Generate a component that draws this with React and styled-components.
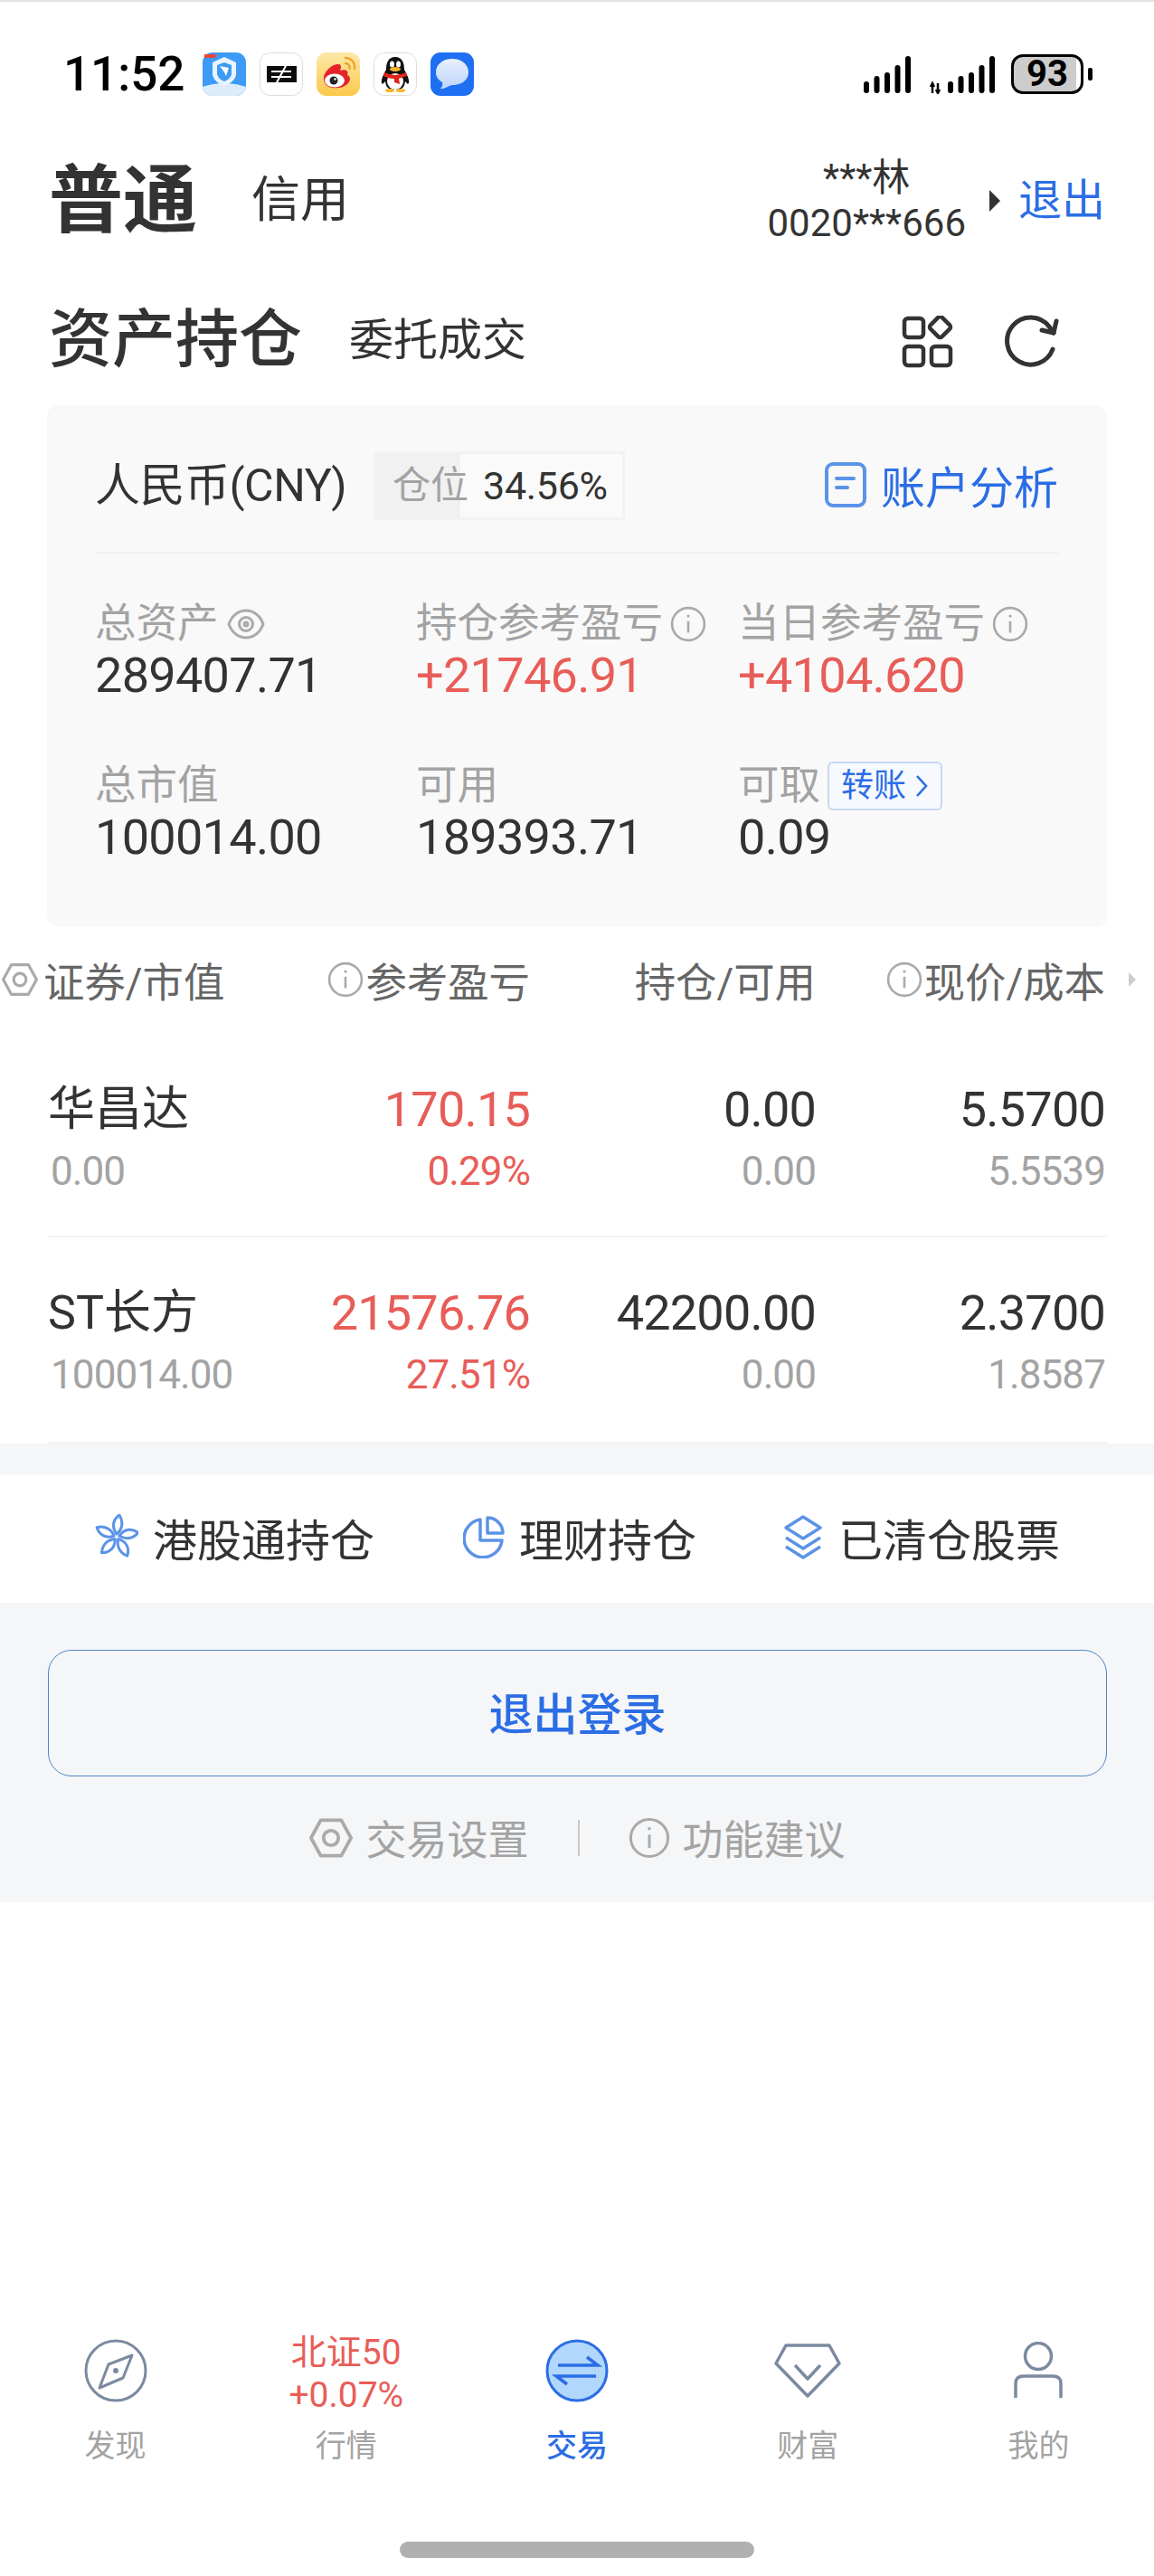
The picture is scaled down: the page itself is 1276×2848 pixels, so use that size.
import React from "react";
import styled, { createGlobalStyle } from "styled-components";

const BLUE = "#2b6de5";
const ICON_BLUE = "#5b93e8";
const RED = "#e85d58";
const DARK = "#333333";
const GREY = "#a3a3a3";
const NAV_STROKE = "#7b8aa0";

const GlobalStyle = createGlobalStyle`
  html, body {
    margin: 0;
    padding: 0;
    background: #fff;
  }
  body {
    font-family: Roboto, "Noto Sans CJK SC", sans-serif;
    color: ${DARK};
  }
`;

const Page = styled.div`
  width: 1276px;
  height: 2848px;
  display: flex;
  flex-direction: column;
  border-top: 2px solid #e4e4e4;
  box-sizing: border-box;
  overflow: hidden;
`;

/* status bar */
const StatusBar = styled.div`
  height: 160px;
  display: flex;
  align-items: center;
  padding: 0 68px 0 70px;
`;

const Clock = styled.div`
  font-size: 53px;
  font-weight: 500;
  color: #000;
  width: 154px;
`;

const AppIcons = styled.div`
  display: flex;
  gap: 15px;
`;

const AppIcon = styled.svg`
  width: 48px;
  height: 48px;
  display: block;
`;

const StatusRight = styled.div`
  margin-left: auto;
  display: flex;
  align-items: center;
`;

const SignalSvg = styled.svg`
  display: block;
  margin-left: ${(p) => (p.$arrows ? "21px" : "0")};
`;

const Battery = styled.div`
  width: 80px;
  height: 44px;
  box-sizing: border-box;
  border: 3px solid #000;
  border-radius: 13px;
  background: linear-gradient(90deg, #cccccc 93%, #fff 93%);
  font-size: 40px;
  font-weight: 700;
  line-height: 38px;
  text-align: center;
  color: #000;
  margin-left: 18px;
`;

const BatteryTip = styled.div`
  width: 5px;
  height: 14px;
  border-radius: 2px;
  background: #000;
  margin-left: 5px;
`;

/* account row */
const AccountRow = styled.div`
  height: 120px;
  display: flex;
  align-items: center;
  padding: 0 54px 0 54px;
`;

const MainTab = styled.div`
  font-size: 82px;
  font-weight: 700;
  line-height: 1;
`;

const SubTab = styled.div`
  font-size: 54px;
  margin-left: 60px;
  line-height: 1;
`;

const AccountInfo = styled.div`
  margin-left: auto;
  text-align: center;
  font-size: 42px;
  line-height: 50px;
`;

const Caret = styled.div`
  width: 0;
  height: 0;
  border-left: 12px solid #333;
  border-top: 12px solid transparent;
  border-bottom: 12px solid transparent;
  margin: 0 20px 0 26px;
`;

const Logout = styled.div`
  font-size: 48px;
  color: ${BLUE};
  line-height: 1;
`;

/* title row */
const TitleRow = styled.div`
  height: 112px;
  margin-top: 38px;
  display: flex;
  align-items: center;
  padding: 0 54px 0 54px;
`;

const Title = styled.div`
  font-size: 70px;
  font-weight: 500;
  line-height: 1;
`;

const TitleTab = styled.div`
  font-size: 49px;
  margin-left: 52px;
  line-height: 1;
`;

const TitleIcons = styled.div`
  margin-left: auto;
  margin-right: 50px;
  margin-top: 3px;
  display: flex;
  gap: 55px;
  align-items: center;
`;

/* asset card */
const Card = styled.div`
  margin: 16px 52px 0;
  height: 577px;
  box-sizing: border-box;
  background: #f9f9f9;
  border-radius: 12px;
  padding: 0 54px;
`;

const CardHead = styled.div`
  height: 164px;
  box-sizing: border-box;
  padding-top: 16px;
  display: flex;
  align-items: center;
  border-bottom: 2px solid #f1f1f1;
`;

const Currency = styled.div`
  font-size: 50px;
  line-height: 1;
  letter-spacing: -0.5px;
  margin-left: -1px;
`;

const Position = styled.div`
  margin-left: 30px;
  width: 278px;
  height: 76px;
  box-sizing: border-box;
  border: 3px solid #f2f2f2;
  display: flex;
  align-items: center;
  font-size: 42px;
  line-height: 70px;
  background: linear-gradient(90deg, #f1f1f1 93px, #fafafa 93px);
`;

const PositionLabel = styled.div`
  width: 118px;
  color: ${GREY};
  white-space: nowrap;
  box-sizing: border-box;
  padding-left: 18px;
`;

const PositionValue = styled.div`
  flex: 1;
  font-size: 43px;
  letter-spacing: -0.3px;
`;

const Analysis = styled.div`
  margin-left: auto;
  margin-top: -3px;
  display: flex;
  align-items: center;
  gap: 16px;
  font-size: 49px;
  color: ${BLUE};
`;

const Metrics = styled.div`
  display: grid;
  grid-template-columns: 355px 356px 1fr;
  grid-auto-rows: 179px;
  padding-top: 50px;
  margin-left: -1px;
`;

const Metric = styled.div`
  display: flex;
  flex-direction: column;
`;

const MetricLabel = styled.div`
  display: flex;
  align-items: center;
  gap: 8px;
  font-size: 45.5px;
  line-height: 56px;
  height: 56px;
  color: ${GREY};
`;

const MetricValue = styled.div`
  font-size: 54px;
  letter-spacing: -0.7px;
  line-height: 60px;
  margin-top: -1px;
  color: ${(p) => (p.$up ? RED : DARK)};
`;

const TransferTag = styled.div`
  display: flex;
  align-items: center;
  height: 54px;
  box-sizing: border-box;
  padding: 0 13px;
  border: 2px solid #c6d8f2;
  border-radius: 6px;
  background: #f6f9fe;
  font-size: 36px;
  color: ${BLUE};
  gap: 9px;
`;

/* holdings table */
const TableHead = styled.div`
  height: 100px;
  margin-top: 8px;
  display: grid;
  grid-template-columns: 284px 302px 316px 320px 54px;
  align-items: center;
  font-size: 45.4px;
  color: #666;
`;

const HeadCell = styled.div`
  display: flex;
  align-items: center;
  justify-content: ${(p) => (p.$left ? "flex-start" : "flex-end")};
  gap: ${(p) => (p.$left ? "6px" : "2px")};
  padding-left: ${(p) => (p.$left ? "2px" : "0")};
`;

const MoreCaret = styled.div`
  width: 0;
  height: 0;
  border-left: 8px solid #ccc;
  border-top: 8px solid transparent;
  border-bottom: 8px solid transparent;
  justify-self: end;
  margin-right: 20px;
`;

const Row = styled.div`
  margin: 0 52px 0 53px;
  height: ${(p) => p.$h}px;
  box-sizing: border-box;
  padding-top: ${(p) => p.$top}px;
  border-bottom: 2px solid #f3f3f3;
  display: grid;
  grid-template-columns: 231px 302px 316px 320px;
`;

const Cell = styled.div`
  text-align: ${(p) => (p.$left ? "left" : "right")};
`;

const MainValue = styled.div`
  font-size: ${(p) => (p.$name ? 52 : 54)}px;
  letter-spacing: ${(p) => (p.$name ? 0 : -0.8)}px;
  line-height: 68px;
  color: ${(p) => (p.$up ? RED : DARK)};
`;

const SubValue = styled.div`
  font-size: 44px;
  letter-spacing: -0.9px;
  line-height: 68px;
  color: ${(p) => (p.$up ? RED : GREY)};
  padding-left: ${(p) => (p.$left ? "3px" : "0")};
`;

/* links and footer */
const GreyGap = styled.div`
  height: 34px;
  background: #f4f6f8;
`;

const Band = styled.div`
  height: 142px;
  box-sizing: border-box;
  padding: 0 0 4px 105px;
  display: flex;
  align-items: center;
  font-size: 49px;
`;

const BandItem = styled.div`
  display: flex;
  align-items: center;
  gap: 16px;
  margin-right: ${(p) => p.$gap}px;
`;

const Footer = styled.div`
  height: 331px;
  box-sizing: border-box;
  background: #f4f6f8;
  padding: 52px 52px 0 53px;
`;

const LogoutButton = styled.div`
  height: 140px;
  box-sizing: border-box;
  padding-bottom: 5px;
  border: 1.5px solid #4f86c6;
  border-radius: 26px;
  display: flex;
  align-items: center;
  justify-content: center;
  font-size: 49px;
  font-weight: 500;
  color: ${BLUE};
`;

const FooterLinks = styled.div`
  margin-top: 35px;
  display: flex;
  align-items: center;
  justify-content: center;
  font-size: 45px;
  color: ${GREY};
`;

const FooterLink = styled.div`
  display: flex;
  align-items: center;
  gap: 14px;
`;

const LinkDivider = styled.div`
  width: 2px;
  height: 40px;
  background: #c9c9c9;
  margin: 0 54px;
`;

/* bottom nav */
const Nav = styled.div`
  margin-top: auto;
  display: grid;
  grid-template-columns: repeat(5, 1fr);
  height: 223px;
`;

const NavItem = styled.div`
  display: flex;
  flex-direction: column;
  align-items: center;
  font-size: 34px;
  color: ${(p) => (p.$active ? BLUE : GREY)};
  font-weight: ${(p) => (p.$active ? 500 : 400)};
`;

const NavIconSlot = styled.div`
  height: 68px;
  display: flex;
  align-items: center;
  justify-content: center;
  margin-bottom: 22px;
`;

const NavTicker = styled.div`
  margin-top: -9px;
  margin-bottom: 5px;
  font-size: 39px;
  line-height: 47px;
  color: ${RED};
  text-align: center;
  font-weight: 400;
`;

const HomeBar = styled.div`
  width: 392px;
  height: 18px;
  border-radius: 9px;
  background: #b0b0b0;
  margin: 0 auto 20px;
`;

/* drawings */
const ShieldAppIcon = () => (
  <AppIcon viewBox="0 0 48 48">
    <rect width="48" height="48" rx="11" fill="#3d9bf5" />
    <path d="M0 38 Q24 30 48 38 V37 A11 11 0 0 1 37 48 H11 A11 11 0 0 1 0 37 Z" fill="#dcecfb" />
    <path d="M24 5 L37 11 V25 Q35 33 24 37 Q13 33 11 25 V11 Z" fill="#e9f4fe" />
    <path d="M24 11 L32 14 V24 Q31 29 24 32 Q17 29 16 24 V14 Z" fill="#3d9bf5" />
    <path d="M19 15 L29 17 L26 26 L24 22 Z" fill="#fff" />
    <path d="M2 2 H16 L14 6 H2 Z" fill="#e8453c" />
  </AppIcon>
);

const BlackAppIcon = () => (
  <AppIcon viewBox="0 0 48 48">
    <rect x="0.5" y="0.5" width="47" height="47" rx="11" fill="#fff" stroke="#dddddd" />
    <rect x="8" y="15" width="33" height="18" fill="#0c0c0c" />
    <path d="M13 21 H35 M13 27 H35" stroke="#fff" strokeWidth="2" />
    <path d="M30 13 L18 35" stroke="#fff" strokeWidth="2" />
  </AppIcon>
);

const WeiboAppIcon = () => (
  <AppIcon viewBox="0 0 48 48">
    <defs>
      <linearGradient id="weiboBg" x1="0" y1="0" x2="0" y2="1">
        <stop offset="0" stopColor="#fde9a8" />
        <stop offset="1" stopColor="#fbc84a" />
      </linearGradient>
    </defs>
    <rect width="48" height="48" rx="11" fill="url(#weiboBg)" />
    <path d="M8 30 C7 22 17 12 25 13 C28 14 27 18 26 20 C32 18 36 20 34 25 C38 27 38 31 34 35 C28 41 9 42 8 30 Z" fill="#e4232b" />
    <ellipse cx="20" cy="31" rx="11" ry="7.5" fill="#fff" />
    <circle cx="19" cy="31" r="4.5" fill="#222" />
    <circle cx="20.5" cy="29.5" r="1.2" fill="#fff" />
    <path d="M32 6 C38 6 43 11 42 18 M32 12 C35 12 37 14 36.5 18" fill="none" stroke="#f2a52f" strokeWidth="2.5" strokeLinecap="round" />
  </AppIcon>
);

const QQAppIcon = () => (
  <AppIcon viewBox="0 0 48 48">
    <rect x="0.5" y="0.5" width="47" height="47" rx="11" fill="#fff" stroke="#dddddd" />
    <path d="M24 5 C32 5 34 12 34 19 C38 26 41 33 38 35 L35 32 C34 38 33 41 24 41 C15 41 14 38 13 32 L10 35 C7 33 10 26 14 19 C14 12 16 5 24 5 Z" fill="#111" />
    <ellipse cx="24" cy="32" rx="9" ry="9" fill="#fff" />
    <ellipse cx="20.5" cy="13" rx="2.5" ry="3.5" fill="#fff" />
    <ellipse cx="27.5" cy="13" rx="2.5" ry="3.5" fill="#fff" />
    <ellipse cx="24" cy="18.5" rx="6" ry="2.5" fill="#f8b62d" />
    <path d="M12 22 Q24 28 36 22 L37 26 Q30 28 28 29 L29 35 L23 33 L23 29 Q16 29 11 26 Z" fill="#e2231a" />
    <ellipse cx="18" cy="42" rx="5" ry="2" fill="#f8b62d" />
    <ellipse cx="30" cy="42" rx="5" ry="2" fill="#f8b62d" />
  </AppIcon>
);

const MessageAppIcon = () => (
  <AppIcon viewBox="0 0 48 48">
    <defs>
      <linearGradient id="bubble" x1="0" y1="0" x2="0" y2="1">
        <stop offset="0" stopColor="#e8f0fc" />
        <stop offset="1" stopColor="#bcd6fb" />
      </linearGradient>
    </defs>
    <rect width="48" height="48" rx="11" fill="#1f6ff2" />
    <path d="M24 7 C34 7 42 13 42 22 C42 31 34 36 24 36 C22 36 15 41 11 40 C13 38 14 35 13 33 C8 30 6 26 6 22 C6 13 14 7 24 7 Z" fill="url(#bubble)" />
  </AppIcon>
);

const barHeights = [13, 19, 23, 31, 41];

const SignalBars = ({ arrows }) => (
  <SignalSvg $arrows={arrows} width={arrows ? 72 : 52} height="44" viewBox={`0 0 ${arrows ? 72 : 52} 44`}>
    {arrows && (
      <path d="M3 43 V34 M1 36 L3 32 L5 36 M9 32 V41 M7 39 L9 43 L11 39" stroke="#000" strokeWidth="2.5" fill="none" />
    )}
    {barHeights.map((h, i) => (
      <rect key={i} x={(arrows ? 20 : 0) + i * 11.5} y={43 - h} width="6" height={h} rx="3" fill="#000" />
    ))}
  </SignalSvg>
);

const GridIcon = () => (
  <svg width="58" height="58" viewBox="0 0 58 58" fill="none" stroke="#333" strokeWidth="4.5">
    <rect x="3" y="3" width="21" height="21" rx="4" />
    <rect x="3" y="34" width="21" height="21" rx="4" />
    <rect x="33" y="34" width="21" height="21" rx="4" />
    <rect x="33.5" y="3.5" width="18" height="18" rx="3" transform="rotate(45 42.5 12.5)" />
  </svg>
);

const RefreshIcon = () => (
  <svg width="62" height="62" viewBox="0 0 62 62" fill="none" stroke="#333" strokeWidth="5" strokeLinecap="round" strokeLinejoin="round">
    <path d="M54 39 A26 26 0 1 1 50 14 L55 21" />
    <path d="M58 8 L55 21 L42 18" />
  </svg>
);

const ReportIcon = () => (
  <svg width="46" height="50" viewBox="0 0 46 50" fill="none" stroke={ICON_BLUE} strokeWidth="4">
    <rect x="2" y="2" width="42" height="46" rx="7" />
    <path d="M13 18 H32 M13 28 H25" strokeLinecap="round" />
  </svg>
);

const EyeIcon = () => (
  <svg width="44" height="36" viewBox="0 0 42 36" fill="none" stroke="#aaa" strokeWidth="3">
    <path d="M2 18 C9 -2 33 -2 40 18 C33 38 9 38 2 18 Z" />
    <circle cx="21" cy="18" r="7.5" />
    <circle cx="21" cy="18" r="2" />
  </svg>
);

const InfoIcon = ({ size = 40, color = "#aaa" }) => (
  <svg width={size} height={size} viewBox="0 0 38 38" fill="none" stroke={color} strokeWidth="2.5">
    <circle cx="19" cy="19" r="17" />
    <path d="M19 16 V28" />
    <circle cx="19" cy="10.5" r="1.5" fill={color} stroke="none" />
  </svg>
);

const HexIcon = ({ size = 40 }) => (
  <svg width={size} height={size} viewBox="0 0 38 38" fill="none" stroke="#aaa" strokeWidth="3" strokeLinejoin="round">
    <path d="M10 3.5 H28 L36.5 19 L28 34.5 H10 L1.5 19 Z" />
    <circle cx="19" cy="19" r="6.5" />
  </svg>
);

const Chevron = () => (
  <svg width="16" height="28" viewBox="0 0 16 28" fill="none" stroke={BLUE} strokeWidth="2.5">
    <path d="M3 3 L13 14 L3 25" />
  </svg>
);

const FlowerIcon = () => (
  <svg width="48" height="50" viewBox="0 0 48 50" fill="none" stroke={ICON_BLUE} strokeWidth="3" strokeLinejoin="round">
    {[0, 72, 144, 216, 288].map((angle) => (
      <path key={angle} d="M24 22 C18 14 20 6 27 1 C32 9 30 17 24 22 Z" transform={`rotate(${angle} 24 25)`} />
    ))}
  </svg>
);

const PieIcon = () => (
  <svg width="46" height="48" viewBox="0 0 46 48" fill="none" stroke={ICON_BLUE} strokeWidth="3.5" strokeLinejoin="round">
    <path d="M19 5 A21 21 0 1 0 43 28 H19 Z" />
    <path d="M27 3 A17 17 0 0 1 44 20 H27 Z" />
  </svg>
);

const LayersIcon = () => (
  <svg width="46" height="50" viewBox="0 0 46 50" fill="none" stroke={ICON_BLUE} strokeWidth="3.5" strokeLinejoin="round">
    <path d="M23 3 L42 15 L23 27 L4 15 Z" />
    <path d="M4 26 L23 38 L42 26" />
    <path d="M4 36 L23 48 L42 36" />
  </svg>
);

const CompassIcon = () => (
  <svg width="70" height="70" viewBox="0 0 70 70" fill="none" stroke={NAV_STROKE} strokeWidth="3">
    <circle cx="35" cy="35" r="33" />
    <path d="M53 18 L43 43 L17 54 L27 28 Z" strokeLinejoin="round" />
    <circle cx="35" cy="35" r="3" fill={NAV_STROKE} stroke="none" />
  </svg>
);

const TradeIcon = () => (
  <svg width="70" height="70" viewBox="0 0 70 70" fill="none">
    <circle cx="35" cy="35" r="33" fill="#b2d7fd" stroke="#2b6de5" strokeWidth="3" />
    <path d="M14 29 H58 L46 20 M56 41 H12 L24 50" stroke="#2b6de5" strokeWidth="3.5" />
  </svg>
);

const GemIcon = () => (
  <svg width="76" height="62" viewBox="0 0 76 62" fill="none" stroke={NAV_STROKE} strokeWidth="3.5" strokeLinejoin="round">
    <path d="M14 3 H62 L73 23 L38 59 L3 23 Z" />
    <path d="M24 25 L38 40 L52 25" />
  </svg>
);

const UserIcon = () => (
  <svg width="54" height="64" viewBox="0 0 54 64" fill="none" stroke={NAV_STROKE} strokeWidth="3.5">
    <circle cx="27" cy="16" r="14.5" />
    <path d="M2 62 V46 Q2 38 11 38 H43 Q52 38 52 46 V62" />
  </svg>
);

const holdings = [
  { name: "华昌达", value: "0.00", profit: "170.15", pct: "0.29%", qty: "0.00", free: "0.00", price: "5.5700", cost: "5.5539", h: 235, top: 60 },
  { name: "ST长方", value: "100014.00", profit: "21576.76", pct: "27.51%", qty: "42200.00", free: "0.00", price: "2.3700", cost: "1.8587", h: 228, top: 50 },
];

const App = () => (
  <>
    <GlobalStyle />
    <Page>
      <StatusBar>
        <Clock>11:52</Clock>
        <AppIcons>
          <ShieldAppIcon />
          <BlackAppIcon />
          <WeiboAppIcon />
          <QQAppIcon />
          <MessageAppIcon />
        </AppIcons>
        <StatusRight>
          <SignalBars />
          <SignalBars arrows />
          <Battery>93</Battery>
          <BatteryTip />
        </StatusRight>
      </StatusBar>

      <AccountRow>
        <MainTab>普通</MainTab>
        <SubTab>信用</SubTab>
        <AccountInfo>
          <div>***林</div>
          <div>0020***666</div>
        </AccountInfo>
        <Caret />
        <Logout>退出</Logout>
      </AccountRow>

      <TitleRow>
        <Title>资产持仓</Title>
        <TitleTab>委托成交</TitleTab>
        <TitleIcons>
          <GridIcon />
          <RefreshIcon />
        </TitleIcons>
      </TitleRow>

      <Card>
        <CardHead>
          <Currency>人民币(CNY)</Currency>
          <Position>
            <PositionLabel>仓位</PositionLabel>
            <PositionValue>34.56%</PositionValue>
          </Position>
          <Analysis>
            <ReportIcon />
            账户分析
          </Analysis>
        </CardHead>
        <Metrics>
          <Metric>
            <MetricLabel>总资产<EyeIcon /></MetricLabel>
            <MetricValue>289407.71</MetricValue>
          </Metric>
          <Metric>
            <MetricLabel>持仓参考盈亏<InfoIcon /></MetricLabel>
            <MetricValue $up>+21746.91</MetricValue>
          </Metric>
          <Metric>
            <MetricLabel>当日参考盈亏<InfoIcon /></MetricLabel>
            <MetricValue $up>+4104.620</MetricValue>
          </Metric>
          <Metric>
            <MetricLabel>总市值</MetricLabel>
            <MetricValue>100014.00</MetricValue>
          </Metric>
          <Metric>
            <MetricLabel>可用</MetricLabel>
            <MetricValue>189393.71</MetricValue>
          </Metric>
          <Metric>
            <MetricLabel>
              可取
              <TransferTag>转账<Chevron /></TransferTag>
            </MetricLabel>
            <MetricValue>0.09</MetricValue>
          </Metric>
        </Metrics>
      </Card>

      <TableHead>
        <HeadCell $left><HexIcon />证券/市值</HeadCell>
        <HeadCell><InfoIcon />参考盈亏</HeadCell>
        <HeadCell>持仓/可用</HeadCell>
        <HeadCell><InfoIcon />现价/成本</HeadCell>
        <MoreCaret />
      </TableHead>

      {holdings.map((item) => (
        <Row key={item.name} $h={item.h} $top={item.top}>
          <Cell $left>
            <MainValue $name>{item.name}</MainValue>
            <SubValue $left>{item.value}</SubValue>
          </Cell>
          <Cell>
            <MainValue $up>{item.profit}</MainValue>
            <SubValue $up>{item.pct}</SubValue>
          </Cell>
          <Cell>
            <MainValue>{item.qty}</MainValue>
            <SubValue>{item.free}</SubValue>
          </Cell>
          <Cell>
            <MainValue>{item.price}</MainValue>
            <SubValue>{item.cost}</SubValue>
          </Cell>
        </Row>
      ))}

      <GreyGap />

      <Band>
        <BandItem $gap={98}><FlowerIcon />港股通持仓</BandItem>
        <BandItem $gap={95}><PieIcon />理财持仓</BandItem>
        <BandItem $gap={0}><LayersIcon />已清仓股票</BandItem>
      </Band>

      <Footer>
        <LogoutButton>退出登录</LogoutButton>
        <FooterLinks>
          <FooterLink><HexIcon size={48} />交易设置</FooterLink>
          <LinkDivider />
          <FooterLink><InfoIcon size={46} />功能建议</FooterLink>
        </FooterLinks>
      </Footer>

      <Nav>
        <NavItem>
          <NavIconSlot><CompassIcon /></NavIconSlot>
          发现
        </NavItem>
        <NavItem>
          <NavTicker>北证50<br />+0.07%</NavTicker>
          行情
        </NavItem>
        <NavItem $active>
          <NavIconSlot><TradeIcon /></NavIconSlot>
          交易
        </NavItem>
        <NavItem>
          <NavIconSlot><GemIcon /></NavIconSlot>
          财富
        </NavItem>
        <NavItem>
          <NavIconSlot><UserIcon /></NavIconSlot>
          我的
        </NavItem>
      </Nav>
      <HomeBar />
    </Page>
  </>
);

export default App;
